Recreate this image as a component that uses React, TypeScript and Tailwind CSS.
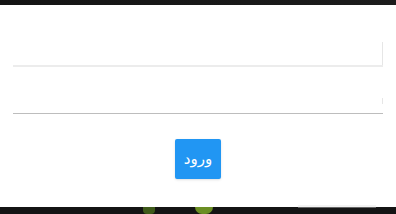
export default function App() {
  return (
    <div className="flex h-[214px] w-[396px] flex-col overflow-hidden bg-white" style={{ fontFamily: '"Noto Sans", "DejaVu Sans", sans-serif' }}>
      <div className="h-[5px] bg-gradient-to-r from-[#141414] to-[#1c1c1c]" />
      <form dir="rtl" className="flex flex-1 flex-col px-[13px] pt-[37px]">
        <div className="flex h-[25px] border-b-2 border-[#ececec]">
          <div className="h-full w-px bg-[#e6e6e6]" />
          <input className="flex-1 bg-transparent outline-none" />
        </div>
        <div className="mt-[30px] flex h-[17px] items-end border-b border-[#bdbdbd]">
          <div className="mb-[9px] h-[6px] w-px bg-[#e6e6e6]" />
          <input className="flex-1 bg-transparent outline-none" />
        </div>
        <div className="mt-[25px] flex justify-center">
          <button type="button" className="flex h-10 w-[46px] items-center justify-center rounded-[2px] bg-[#2196f3] pb-[2px] text-[15px] text-white shadow-sm">
            ورود
          </button>
        </div>
      </form>
      <div className="relative h-[7px] bg-[#141414]">
        <div className="absolute left-[143px] top-0 h-[7px] w-[12px] rounded-b bg-[#3f5a1a]" />
        <div className="absolute left-[195px] top-0 h-[7px] w-[18px] rounded-b-full bg-[#6b8e23]" />
        <div className="absolute left-[298px] -top-[2px] h-[3px] w-[78px] bg-[#e0e0e0] opacity-40" />
      </div>
    </div>
  );
}
